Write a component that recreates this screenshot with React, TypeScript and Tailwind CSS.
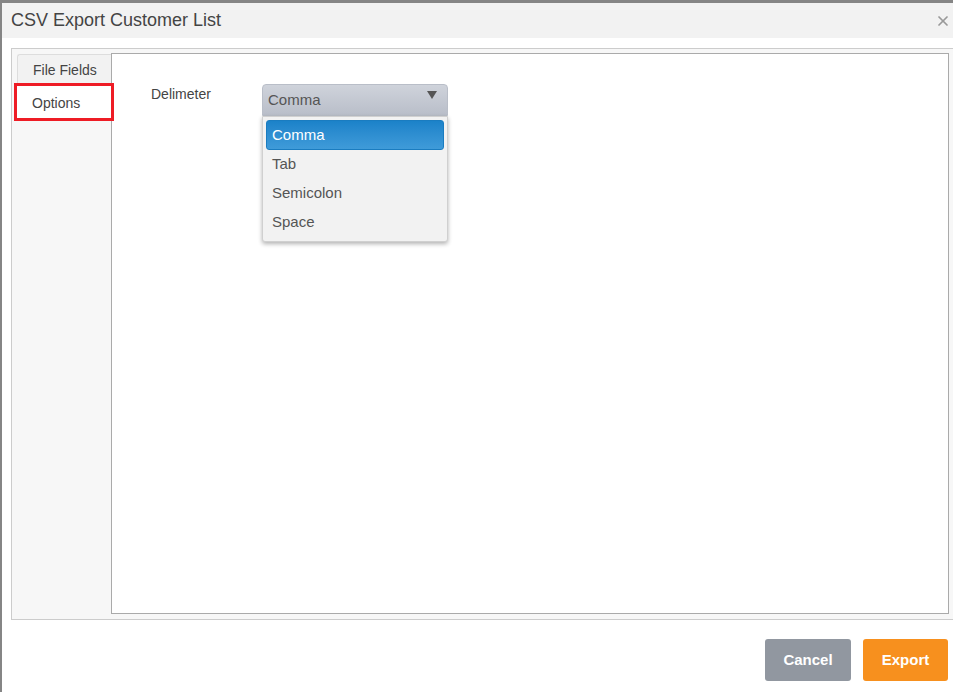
import { X } from "lucide-react";

const options = ["Comma", "Tab", "Semicolon", "Space"];

function DelimiterSelect() {
    const selected = "Comma";
    return (
        <div className="relative w-[186px]">
            <div className="flex h-[32px] items-center justify-between rounded-t-[4px] border border-[#b9bec8] bg-gradient-to-b from-[#cfd3db] to-[#b9bec9] pl-[5px] pr-[10px] text-[15px] text-[#555]">
                <span>{selected}</span>
                <span className="-mt-[10px] h-0 w-0 border-x-[5px] border-t-[8px] border-x-transparent border-t-[#555]" />
            </div>
            <ul className="absolute left-0 top-[32px] w-[186px] rounded-b-[3px] border border-[#d0d0d0] bg-[#f2f2f2] px-[3px] pb-[4px] pt-[3px] shadow-[0_2px_4px_rgba(0,0,0,0.3)]">
                {options.map((opt) =>
                    opt === selected ? (
                        <li
                            key={opt}
                            className="flex h-[30px] items-center rounded-[3px] border border-[#1a7cc0] bg-gradient-to-b from-[#1b82c9] to-[#3f9bd9] px-[5px] text-[15px] text-white"
                        >
                            {opt}
                        </li>
                    ) : (
                        <li
                            key={opt}
                            className="flex h-[29px] items-center px-[6px] text-[15px] text-[#555]"
                        >
                            {opt}
                        </li>
                    ),
                )}
            </ul>
        </div>
    );
}

export default function App() {
    return (
        <div
            className="h-[692px] w-[953px] overflow-hidden bg-[#858585] pl-[2px] pt-[3px]"
            style={{ fontFamily: '"Liberation Sans", Arial, sans-serif' }}
        >
            <div className="flex h-full flex-col bg-white">
                {/* header */}
                <div className="flex h-[35px] items-center justify-between bg-[#f2f2f2] pl-[9px] pr-[2px]">
                    <h1 className="text-[18px] text-[#444]">CSV Export Customer List</h1>
                    <X className="h-[16px] w-[16px] text-[#999]" strokeWidth={2.6} />
                </div>

                {/* tabs box */}
                <div className="ml-[9px] mt-[10px] flex h-[572px] border border-r-0 border-[#cccccc] bg-[#f7f7f7] pt-[4px]">
                    <div className="flex w-[99px] flex-col pt-[1px]">
                        <div className="ml-[5px] flex h-[29px] items-center rounded-tl-[3px] border-l border-t border-[#dddddd] bg-[#f2f2f2] pl-[15px] pt-[3px] text-[14px] text-[#444]">
                            File Fields
                        </div>
                        <div className="relative z-10 ml-[2px] flex h-[38px] w-[100px] items-center border-[3px] border-[#ee1c25] bg-white pl-[15px] pt-[2px] text-[14px] text-[#444]">
                            Options
                        </div>
                    </div>
                    <div className="mr-[4px] mb-[5px] flex flex-1 gap-[49px] border border-[#aaaaaa] bg-white pl-[39px] pt-[30px]">
                        <label className="w-[62px] text-[14px] text-[#444]">Delimeter</label>
                        <DelimiterSelect />
                    </div>
                </div>

                {/* footer */}
                <div className="flex flex-1 items-start justify-end gap-[12px] pr-[5px] pt-[19px]">
                    <button className="h-[42px] w-[86px] rounded-[3px] bg-[#9197a0] text-[15px] font-bold text-white">
                        Cancel
                    </button>
                    <button className="h-[42px] w-[85px] rounded-[3px] bg-[#f7901e] text-[15px] font-bold text-white">
                        Export
                    </button>
                </div>
            </div>
        </div>
    );
}
